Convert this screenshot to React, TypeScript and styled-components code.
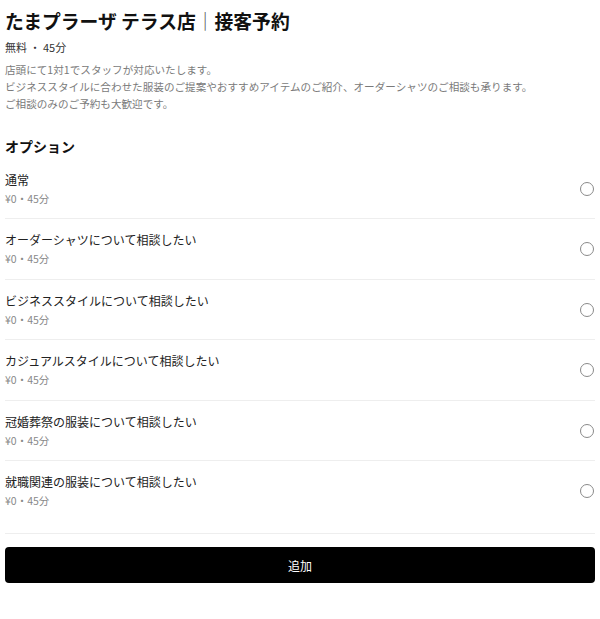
import React, { useState } from 'react';
import styled, { createGlobalStyle } from 'styled-components';

const options = [
  { id: 'normal', name: '通常', price: '¥0', time: '45分' },
  { id: 'shirt', name: 'オーダーシャツについて相談したい', price: '¥0', time: '45分' },
  { id: 'business', name: 'ビジネススタイルについて相談したい', price: '¥0', time: '45分' },
  { id: 'casual', name: 'カジュアルスタイルについて相談したい', price: '¥0', time: '45分' },
  { id: 'ceremony', name: '冠婚葬祭の服装について相談したい', price: '¥0', time: '45分' },
  { id: 'job', name: '就職関連の服装について相談したい', price: '¥0', time: '45分' },
];

function App() {
  const [selected, setSelected] = useState<string | null>(null);

  return (
    <>
      <GlobalStyle />
      <Page>
        <Title>
          たまプラーザ テラス店<Bar>｜</Bar>接客予約
        </Title>
        <Meta>無料 ・ 45分</Meta>
        <Description>
          店頭にて1対1でスタッフが対応いたします。
          <br />
          ビジネススタイルに合わせた服装のご提案やおすすめアイテムのご紹介、オーダーシャツのご相談も承ります。
          <br />
          ご相談のみのご予約も大歓迎です。
        </Description>

        <SectionTitle>オプション</SectionTitle>
        <OptionList>
          {options.map((o) => (
            <OptionRow key={o.id} onClick={() => setSelected(o.id)}>
              <OptionText>
                <OptionName>{o.name}</OptionName>
                <OptionSub>
                  {o.price}・{o.time}
                </OptionSub>
              </OptionText>
              <Radio $checked={selected === o.id} />
            </OptionRow>
          ))}
        </OptionList>

        <AddButton type="button">追加</AddButton>
      </Page>
    </>
  );
}

const GlobalStyle = createGlobalStyle`
  body {
    margin: 0;
    background: #ffffff;
    font-family: "Noto Sans CJK JP", "Noto Sans", sans-serif;
    color: #1a1a1a;
  }
`;

const Page = styled.div`
  padding: 8px 5px 0;
`;

const Title = styled.h1`
  margin: 0;
  font-size: 18.8px;
  line-height: 26px;
  font-weight: bold;
  color: #111;
`;

const Bar = styled.span`
  font-weight: normal;
  color: #555;
`;

const Meta = styled.div`
  margin-top: 5px;
  font-size: 11px;
  line-height: 16px;
  color: #333;
`;

const Description = styled.p`
  margin: 5.5px 0 0;
  font-size: 10.6px;
  line-height: 17px;
  color: #7a7a7a;
`;

const SectionTitle = styled.h2`
  margin: 24px 0 0;
  font-size: 14px;
  line-height: 20px;
  font-weight: bold;
  color: #111;
`;

const OptionList = styled.div`
  margin-top: 3px;
  padding-bottom: 12px;
  border-bottom: 1px solid #eeeeee;
`;

const OptionRow = styled.div`
  display: flex;
  align-items: center;
  justify-content: space-between;
  padding: 12px 0 11.6px;
  border-bottom: 1px solid #eeeeee;
  cursor: pointer;

  &:last-child {
    border-bottom: none;
  }
`;

const OptionText = styled.div`
  display: flex;
  flex-direction: column;
  gap: 2px;
`;

const OptionName = styled.div`
  font-size: 12px;
  line-height: 18px;
  color: #222;
`;

const OptionSub = styled.div`
  font-size: 10.5px;
  line-height: 16px;
  color: #888;
`;

const Radio = styled.span<{ $checked: boolean }>`
  width: 12px;
  height: 12px;
  margin-right: 1px;
  border-radius: 50%;
  border: 1.5px solid #8a8a8a;
  background: ${(p) => (p.$checked ? 'radial-gradient(circle, #000 45%, transparent 50%)' : 'transparent')};
  flex-shrink: 0;
`;

const AddButton = styled.button`
  display: block;
  width: 100%;
  height: 36px;
  margin-top: 13px;
  border: none;
  border-radius: 4px;
  background: #000;
  color: #fff;
  font-family: inherit;
  font-size: 12px;
`;

export default App;
